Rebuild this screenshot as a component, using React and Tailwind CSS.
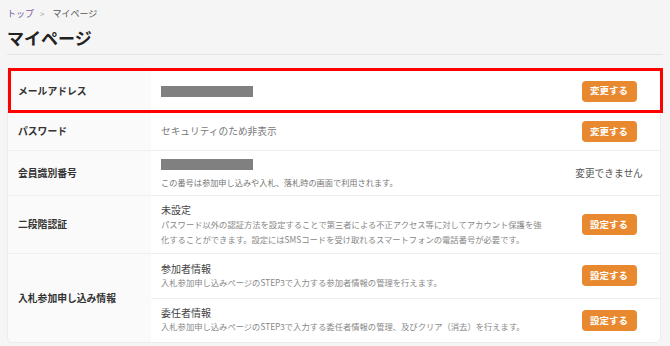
import React from "react";

const FONT = { fontFamily: '"Noto Sans CJK JP", "Noto Sans", sans-serif' };

function Btn({ children }) {
  return (
    <div className="w-[55px] h-[21px] rounded-[4px] bg-[#e8892f] text-white text-[9.5px] font-bold flex items-center justify-center leading-none">
      {children}
    </div>
  );
}

function Action({ children }) {
  return <div className="w-[80px] mr-[11px] flex items-center justify-center shrink-0">{children}</div>;
}

function Label({ children }) {
  return (
    <div className="w-[143px] shrink-0 bg-[#fafafa] flex items-center pl-[10px] text-[9.8px] font-bold text-[#333]">
      {children}
    </div>
  );
}

export default function App() {
  return (
    <div style={FONT} className="relative w-[670px] h-[346px] bg-[#f5f5f5] overflow-hidden px-[7px] pt-[8px]">
      <div className="flex items-center h-[12px] text-[9px] leading-[12px]">
        <span className="text-[#7a5aa3]">トップ</span>
        <span className="text-[#999] ml-[6px] mr-[8px] text-[8px]">&gt;</span>
        <span className="text-[#555]">マイページ</span>
      </div>
      <div className="mt-[6px] h-[24px] text-[17px] leading-[24px] font-bold text-[#222]">マイページ</div>
      <div className="mt-[4px] h-px bg-[#e6e6e6]" />

      <div className="mt-[14px] w-[654px] bg-white border border-[#ececec] rounded-[6px] overflow-hidden">
        {/* email */}
        <div className="flex h-[42px]">
          <Label>メールアドレス</Label>
          <div className="flex-1 flex items-center pl-[10px]">
            <div className="w-[92px] h-[11px] bg-[#808080]" />
          </div>
          <Action>
            <Btn>変更する</Btn>
          </Action>
        </div>
        {/* password */}
        <div className="flex h-[38px] border-t border-[#efefef]">
          <Label>パスワード</Label>
          <div className="flex-1 flex items-center pl-[10px] text-[9.7px] text-[#777]">セキュリティのため非表示</div>
          <Action>
            <Btn>変更する</Btn>
          </Action>
        </div>
        {/* member id */}
        <div className="flex h-[45px] border-t border-[#efefef]">
          <Label>会員識別番号</Label>
          <div className="flex-1 flex flex-col justify-center pl-[10px]">
            <div className="w-[92px] h-[11px] bg-[#808080]" />
            <div className="mt-[6px] text-[8.2px] leading-[12px] text-[#777]">
              この番号は参加申し込みや入札、落札時の画面で利用されます。
            </div>
          </div>
          <Action>
            <span className="text-[9.7px] text-[#555]">変更できません</span>
          </Action>
        </div>
        {/* 2fa */}
        <div className="flex h-[58px] border-t border-[#efefef]">
          <Label>二段階認証</Label>
          <div className="flex-1 flex flex-col justify-center pl-[10px]">
            <div className="text-[10px] leading-[15px] text-[#444]">未設定</div>
            <div className="text-[8.3px] leading-[15px] text-[#888] whitespace-nowrap">
              パスワード以外の認証方法を設定することで第三者による不正アクセス等に対してアカウント保護を強
              <br />
              化することができます。設定にはSMSコードを受け取れるスマートフォンの電話番号が必要です。
            </div>
          </div>
          <Action>
            <Btn>設定する</Btn>
          </Action>
        </div>
        {/* entry info */}
        <div className="flex h-[89px] border-t border-[#efefef]">
          <Label>入札参加申し込み情報</Label>
          <div className="flex-1 flex flex-col">
            <div className="flex h-[44px]">
              <div className="flex-1 flex flex-col justify-center pl-[10px] pb-[1px]">
                <div className="text-[10px] leading-[14px] text-[#444]">参加者情報</div>
                <div className="text-[8.3px] leading-[13px] text-[#888]">
                  入札参加申し込みページのSTEP3で入力する参加者情報の管理を行えます。
                </div>
              </div>
              <Action>
                <Btn>設定する</Btn>
              </Action>
            </div>
            <div className="flex h-[45px] border-t border-[#efefef]">
              <div className="flex-1 flex flex-col justify-center pl-[10px] pb-[1px]">
                <div className="text-[10px] leading-[14px] text-[#444]">委任者情報</div>
                <div className="text-[8.3px] leading-[13px] text-[#888]">
                  入札参加申し込みページのSTEP3で入力する委任者情報の管理、及びクリア（消去）を行えます。
                </div>
              </div>
              <Action>
                <Btn>設定する</Btn>
              </Action>
            </div>
          </div>
        </div>
      </div>

      <div className="absolute left-[8px] top-[68px] w-[655px] h-[45px] border-[3px] border-[#ff0000] pointer-events-none" />
    </div>
  );
}
